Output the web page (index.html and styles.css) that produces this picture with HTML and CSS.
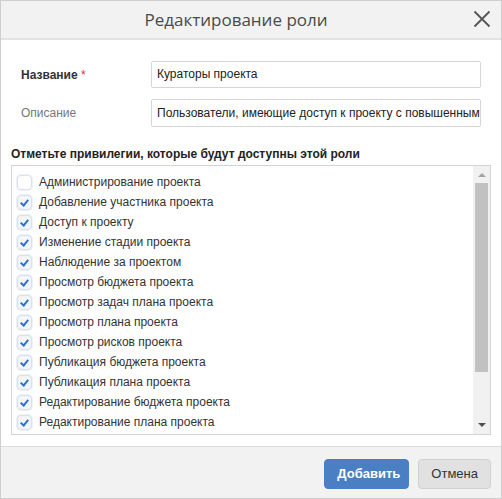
FILE: index.html
```html
<!DOCTYPE html>
<html lang="ru">
<head>
<meta charset="utf-8">
<link rel="stylesheet" href="styles.css">
</head>
<body>
<div class="dialog">
  <div class="header">
    <div class="title">Редактирование роли</div>
    <svg class="close" width="18" height="18" viewBox="0 0 18 18"><path d="M1.5 1.5 L16.5 16.5 M16.5 1.5 L1.5 16.5" stroke="#555" stroke-width="1.8" fill="none"/></svg>
  </div>
  <div class="body">
    <div class="row">
      <label class="label req">Название <span class="star">*</span></label>
      <div class="input">Кураторы проекта</div>
    </div>
    <div class="row">
      <label class="label">Описание</label>
      <div class="input">Пользователи, имеющие доступ к проекту с повышенными правами</div>
    </div>
    <div class="section">Отметьте привилегии, которые будут доступны этой роли</div>
    <div class="listbox">
      <ul class="list">
        <li><span class="cb"></span>Администрирование проекта</li>
        <li><span class="cb on"></span>Добавление участника проекта</li>
        <li><span class="cb on"></span>Доступ к проекту</li>
        <li><span class="cb on"></span>Изменение стадии проекта</li>
        <li><span class="cb on"></span>Наблюдение за проектом</li>
        <li><span class="cb on"></span>Просмотр бюджета проекта</li>
        <li><span class="cb on"></span>Просмотр задач плана проекта</li>
        <li><span class="cb on"></span>Просмотр плана проекта</li>
        <li><span class="cb on"></span>Просмотр рисков проекта</li>
        <li><span class="cb on"></span>Публикация бюджета проекта</li>
        <li><span class="cb on"></span>Публикация плана проекта</li>
        <li><span class="cb on"></span>Редактирование бюджета проекта</li>
        <li><span class="cb on"></span>Редактирование плана проекта</li>
        <li><span class="cb on"></span>Редактирование рисков проекта</li>
      </ul>
      <div class="scroll">
        <div class="arrow up"></div>
        <div class="track"><div class="thumb"></div></div>
        <div class="arrow down"></div>
      </div>
    </div>
  </div>
  <div class="footer">
    <button class="btn primary">Добавить</button>
    <button class="btn">Отмена</button>
  </div>
</div>
</body>
</html>
```
FILE: styles.css
```css
html, body { margin: 0; padding: 0; background: #fff; }
body { font-family: "Liberation Sans", Arial, sans-serif; font-size: 12px; color: #333; }
.dialog {
  width: 502px; height: 499px; box-sizing: border-box;
  border: 1px solid #cfcfcf; display: flex; flex-direction: column;
}
.header {
  height: 37px; background: #f2f2f2; border-bottom: 2px solid #e2e2e2;
  position: relative; display: flex; align-items: center; justify-content: center;
}
.title { font-family: "Open Sans", sans-serif; font-size: 17px; color: #4a4a4a; margin-left: -30px; }
.close { position: absolute; right: 10px; top: 9px; }
.body { flex: 1; padding: 21px 10px 0 10px; }
.row { display: flex; align-items: center; margin-bottom: 11px; }
.label { width: 140px; padding-left: 10px; box-sizing: border-box; font-size: 12px; color: #777; }
.label.req { font-weight: bold; color: #333; }
.star { color: #e0302a; font-weight: normal; }
.input {
  width: 330px; height: 27px; box-sizing: border-box; border: 1px solid #d6d6d6; border-radius: 2px;
  padding: 0 5px; line-height: 25px; white-space: nowrap; overflow: hidden; color: #222;
}
.row + .row .input { height: 28px; line-height: 26px; }
.section { font-weight: bold; margin: 20px 0 4px 0; font-size: 12px; color: #222; }
.listbox {
  width: 480px; height: 270px; box-sizing: border-box; border: 1px solid #d3d3d3;
  display: flex; overflow: hidden;
}
.list { flex: 1; list-style: none; margin: 0; padding: 6px 0 0 5px; overflow: hidden; }
.list li { height: 20px; display: flex; align-items: center; color: #333; white-space: nowrap; }
.cb {
  width: 15px; height: 15px; box-sizing: border-box; border: 1px solid #dbe1ea; background: #fff;
  border-radius: 4px; margin-right: 7px; position: relative; flex: none;
  box-shadow: 0 0 0 1px #eef1f6;
}
.cb.on { background: #f2f5fa; }
.cb.on::after {
  content: ""; position: absolute; left: 4px; top: 2px; width: 3px; height: 6px;
  border-right: 2px solid #2f72c8; border-bottom: 2px solid #2f72c8; transform: rotate(40deg);
}
.scroll { width: 17px; background: #f1f1f1; display: flex; flex-direction: column; align-items: center; }
.arrow { height: 17px; width: 17px; flex: none; position: relative; }
.arrow.up::after {
  content: ""; position: absolute; left: 5px; top: 7px;
  border-left: 4px solid transparent; border-right: 4px solid transparent; border-bottom: 4px solid #a3a3a3;
}
.arrow.down::after {
  content: ""; position: absolute; left: 5px; top: 6px;
  border-left: 4px solid transparent; border-right: 4px solid transparent; border-top: 4px solid #505050;
}
.track { flex: 1; width: 13px; }
.thumb { height: 189px; background: #c1c1c1; }
.footer {
  height: 51px; background: #f2f2f2; border-top: 1px solid #dcdcdc;
  display: flex; justify-content: flex-end; align-items: center; padding-right: 10px; gap: 9px;
}
.btn {
  font-family: "Liberation Sans", Arial, sans-serif; font-size: 13px; height: 30px; border-radius: 4px;
  border: 1px solid #d0d0d0; background: #e1e1e1; color: #333; padding: 0 12px; margin-top: 2px;
}
.btn.primary { background: #4a7fc3; border-color: #4a7fc3; color: #fff; font-weight: bold; width: 85px; }
```
